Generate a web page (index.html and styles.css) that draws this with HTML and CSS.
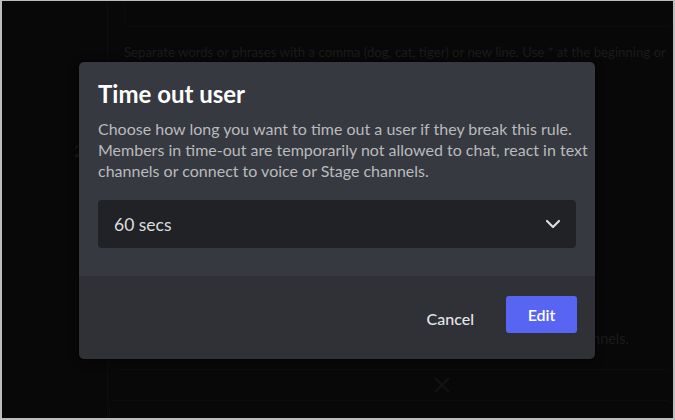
FILE: index.html
```html
<!DOCTYPE html>
<html lang="en">
<head>
<meta charset="utf-8">
<title>Time out user</title>
<link rel="stylesheet" href="styles.css">
</head>
<body>
<div class="frame">
  <div class="app">
    <aside class="sidebar">
      <span class="side-num">2</span>
    </aside>
    <main class="main">
      <div class="bg-topbox"></div>
      <p class="bg-hint">Separate words or phrases with a comma (dog, cat, tiger) or new line. Use * at the beginning or</p>
      <div class="bg-box1">
        <p class="bg-line">channels.</p>
      </div>
      <div class="bg-x">
        <svg width="18" height="18" viewBox="0 0 18 18"><path d="M2 2 L16 16 M16 2 L2 16" stroke="#131313" stroke-width="2" fill="none"/></svg>
      </div>
      <div class="bg-box2"></div>
    </main>
  </div>

  <div class="modal" role="dialog">
    <div class="modal-body">
      <h2 class="modal-title">Time out user</h2>
      <p class="modal-desc">Choose how long you want to time out a user if they break this rule. Members in time-out are temporarily not allowed to chat, react in text channels or connect to voice or Stage channels.</p>
      <div class="select">
        <span class="select-value">60 secs</span>
        <svg class="chevron" width="16" height="10" viewBox="0 0 16 10"><path d="M2 2 L8 8 L14 2" stroke="#dcddde" stroke-width="2.2" fill="none" stroke-linecap="round" stroke-linejoin="round"/></svg>
      </div>
    </div>
    <div class="modal-footer">
      <button class="btn-cancel">Cancel</button>
      <button class="btn-edit">Edit</button>
    </div>
  </div>
</div>
</body>
</html>
```

FILE: styles.css
```css
* { box-sizing: border-box; }
html, body { margin: 0; padding: 0; }
body {
  width: 675px;
  height: 420px;
  background: #080808;
  font-family: Lato, "Noto Sans", sans-serif;
}
.frame {
  position: relative;
  width: 675px;
  height: 420px;
  border: 2px solid #bdbdbd;
  border-top-width: 1px;
  background: #080808;
  overflow: hidden;
}
.app {
  display: flex;
  height: 100%;
}
.sidebar {
  width: 106px;
  flex: none;
  border-right: 1px solid #0d0d0d;
  padding-top: 139px;
  padding-left: 72px;
}
.side-num {
  color: #171717;
  font-weight: 700;
  font-size: 17px;
}
.main {
  flex: 1;
  display: flex;
  flex-direction: column;
  min-width: 0;
}
.bg-topbox {
  margin-left: 16px;
  height: 26px;
  border: 1px solid #0c0c0c;
  border-top: none;
  border-radius: 0 0 4px 4px;
  flex: none;
}
.bg-hint {
  margin: 16px 0 0 16px;
  font-size: 13.2px;
  line-height: 18px;
  color: #1b1b1b;
  white-space: nowrap;
}
.bg-box1 {
  margin: 219px 0 0 1px;
  height: 90px;
  border: 1px solid #0d0d0d;
  border-top: none;
  border-radius: 0 0 6px 6px;
  padding: 52px 43px 0 0;
  flex: none;
}
.bg-line {
  margin: 0;
  text-align: right;
  font-size: 14.5px;
  line-height: 14px;
  color: #1b1b1b;
  white-space: nowrap;
}
.bg-x {
  height: 30px;
  display: flex;
  align-items: center;
  padding-left: 325px;
  flex: none;
}
.bg-x svg { display: block; }
.bg-box2 {
  margin-left: 1px;
  flex: 1;
  border: 1px solid #0d0d0d;
  border-bottom: none;
  border-radius: 6px 6px 0 0;
}

/* Modal */
.modal {
  position: absolute;
  left: 77px;
  top: 61px;
  width: 516px;
  border-radius: 5px;
  overflow: hidden;
  box-shadow: 0 0 0 1px rgba(0,0,0,0.3), 0 2px 10px rgba(0,0,0,0.4);
}
.modal-body {
  background: #36393f;
  padding: 18px 19px 28px;
}
.modal-title {
  margin: 0;
  color: #ffffff;
  font-size: 24px;
  line-height: 28px;
  font-weight: 700;
}
.modal-desc {
  margin: 10px -16px 0 0;
  color: #b9bbbe;
  font-size: 16px;
  line-height: 21px;
}
.select {
  margin-top: 19px;
  height: 48px;
  background: #202225;
  border-radius: 4px;
  display: flex;
  align-items: center;
  justify-content: space-between;
  padding: 0 15px 0 16px;
}
.select-value {
  color: #dcddde;
  font-size: 17.5px;
}
.chevron { display: block; }
.modal-footer {
  background: #2f3136;
  display: flex;
  justify-content: flex-end;
  align-items: flex-start;
  padding: 20px 18px 26px;
}
.btn-cancel {
  background: none;
  border: none;
  color: #e3e5e8;
  font-family: inherit;
  font-size: 16px;
  font-weight: 500;
  height: 37px;
  padding: 7px 32px 0 16px;
  line-height: 21px;
}
.btn-edit {
  background: #5865f2;
  border: none;
  border-radius: 3px;
  color: #ffffff;
  font-family: inherit;
  font-size: 16px;
  font-weight: 600;
  width: 71px;
  height: 37px;
  padding: 0;
}
```
